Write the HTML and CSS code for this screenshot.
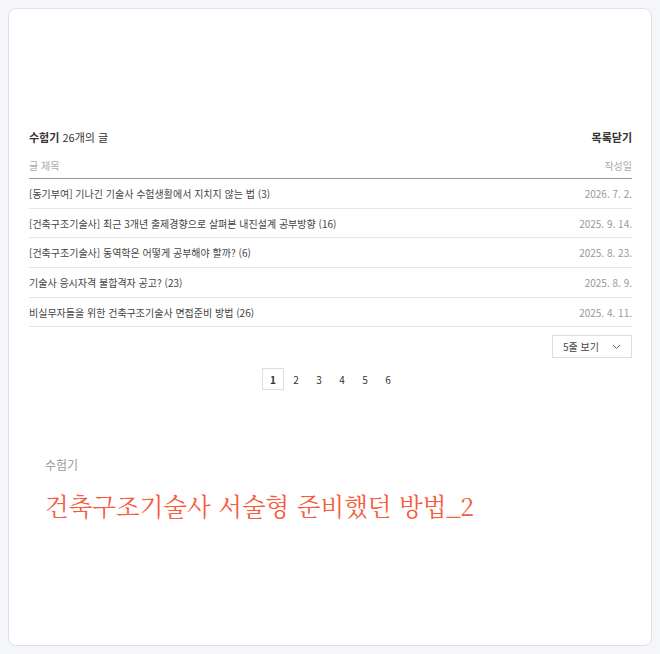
FILE: index.html
```html
<!DOCTYPE html>
<html lang="ko">
<head>
<meta charset="utf-8">
<link rel="stylesheet" href="styles.css">
</head>
<body>
<div class="card">
  <section class="list">
    <div class="list-head">
      <div class="list-title"><strong>수험기</strong> 26개의 글</div>
      <a class="close">목록닫기</a>
    </div>
    <div class="col-head">
      <span>글 제목</span>
      <span>작성일</span>
    </div>
    <ul class="rows">
      <li class="row"><span>[동기부여] 기나긴 기술사 수험생활에서 지치지 않는 법 (3)</span><span class="date">2026. 7. 2.</span></li>
      <li class="row"><span>[건축구조기술사] 최근 3개년 출제경향으로 살펴본 내진설계 공부방향 (16)</span><span class="date">2025. 9. 14.</span></li>
      <li class="row"><span>[건축구조기술사] 동역학은 어떻게 공부해야 할까? (6)</span><span class="date">2025. 8. 23.</span></li>
      <li class="row"><span>기술사 응시자격 불합격자 공고? (23)</span><span class="date">2025. 8. 9.</span></li>
      <li class="row"><span>비실무자들을 위한 건축구조기술사 면접준비 방법 (26)</span><span class="date">2025. 4. 11.</span></li>
    </ul>
    <div class="select-row">
      <div class="select"><span>5줄 보기</span>
        <svg width="9" height="6" viewBox="0 0 9 6"><path d="M1 1l3.5 3.5L8 1" fill="none" stroke="#666" stroke-width="1"/></svg>
      </div>
    </div>
    <div class="pager">
      <span class="page current">1</span>
      <span class="page">2</span>
      <span class="page">3</span>
      <span class="page">4</span>
      <span class="page">5</span>
      <span class="page">6</span>
    </div>
  </section>
  <section class="post">
    <div class="category">수험기</div>
    <h1 class="post-title">건축구조기술사 서술형 준비했던 방법_2</h1>
  </section>
</div>
</body>
</html>
```
FILE: styles.css
```css
* { box-sizing: border-box; }
html, body { margin: 0; padding: 0; }
body {
  background: #f5f6f9;
  padding: 8px;
  font-family: "Noto Sans CJK KR", "Noto Sans", sans-serif;
  color: #333;
}
.card {
  background: #fff;
  border: 1px solid #dfe1e8;
  border-radius: 8px;
  height: 638px;
  padding: 116px 19px 0 20px;
}
.list-head {
  display: flex;
  justify-content: space-between;
  align-items: center;
  height: 24px;
  font-size: 11px;
  color: #333;
}
.list-title strong { font-weight: 700; }
.close { font-weight: 700; color: #333; }
.col-head {
  display: flex;
  justify-content: space-between;
  align-items: center;
  height: 30px;
  padding-top: 3px;
  font-size: 10px;
  color: #aaa;
  border-bottom: 1px solid #999;
}
.rows { list-style: none; margin: 0; padding: 0; }
.row {
  display: flex;
  justify-content: space-between;
  align-items: center;
  height: 29.7px;
  border-bottom: 1px solid #e6e6e6;
  font-size: 10px;
  color: #444;
}
.date { color: #999; }
.select-row {
  display: flex;
  justify-content: flex-end;
  margin-top: 8px;
}
.select {
  width: 80px;
  height: 23px;
  border: 1px solid #ddd;
  display: flex;
  align-items: center;
  justify-content: space-between;
  padding: 0 10px 0 10px;
  font-size: 10px;
  color: #444;
}
.pager {
  display: flex;
  justify-content: center;
  gap: 1px;
  margin-top: 10px;
}
.page {
  width: 22px;
  height: 22px;
  display: flex;
  align-items: center;
  justify-content: center;
  font-size: 10px;
  color: #333;
  border: 1px solid transparent;
}
.page.current { border-color: #ddd; font-weight: 700; }
.post { padding: 66px 0 0 16px; }
.category {
  font-size: 12px;
  color: #999;
}
.post-title {
  margin: 15px 0 0;
  font-family: "Noto Serif CJK KR", "Noto Serif KR", "Liberation Serif", serif;
  font-weight: 400;
  font-size: 24.5px;
  color: #f55d3e;
}
```
